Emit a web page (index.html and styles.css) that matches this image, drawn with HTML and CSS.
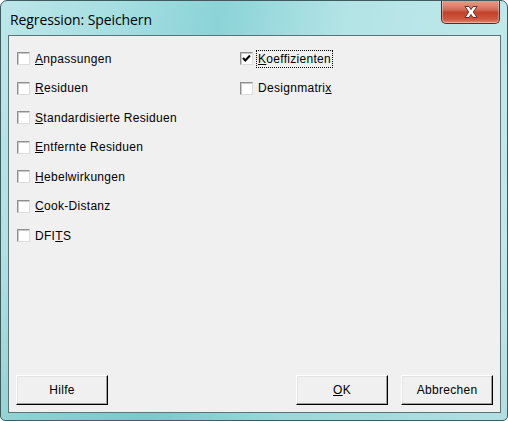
FILE: index.html
```html
<!DOCTYPE html>
<html lang="de">
<head>
<meta charset="UTF-8">
<title>Regression: Speichern</title>
<link rel="stylesheet" href="styles.css">
</head>
<body>
<div class="window">
  <div class="title-bar">
    <span class="title-text">Regression: Speichern</span>
    <button class="close-button" aria-label="Schließen">
      <svg width="20" height="14" viewBox="0 0 20 14">
        <path d="M4 1.5 L8 1.5 L10 4.5 L12 1.5 L16 1.5 L12.3 7 L16 12.5 L12 12.5 L10 9.5 L8 12.5 L4 12.5 L7.7 7 Z" fill="#fff" stroke="#6b2a1e" stroke-width="1" stroke-linejoin="round"/>
      </svg>
    </button>
  </div>

  <div class="client">
    <div class="options">
      <div class="option-column">
        <label class="option"><span class="check-box"></span><span><u>A</u>npassungen</span></label>
        <label class="option"><span class="check-box"></span><span><u>R</u>esiduen</span></label>
        <label class="option"><span class="check-box"></span><span><u>S</u>tandardisierte Residuen</span></label>
        <label class="option"><span class="check-box"></span><span><u>E</u>ntfernte Residuen</span></label>
        <label class="option"><span class="check-box"></span><span><u>H</u>ebelwirkungen</span></label>
        <label class="option"><span class="check-box"></span><span><u>C</u>ook-Distanz</span></label>
        <label class="option"><span class="check-box"></span><span>DFI<u>T</u>S</span></label>
      </div>
      <div class="option-column">
        <label class="option">
          <span class="check-box">
            <svg width="11" height="11" viewBox="0 0 11 11"><path d="M2 5 L4.3 7.5 L9 2.5" fill="none" stroke="#000" stroke-width="2"/></svg>
          </span>
          <span class="focused"><u>K</u>oeffizienten</span>
        </label>
        <label class="option"><span class="check-box"></span><span>Designmatri<u>x</u></span></label>
      </div>
    </div>

    <div class="button-row">
      <button class="push-button">Hilfe</button>
      <div class="button-group">
        <button class="push-button"><u>O</u>K</button>
        <button class="push-button">Abbrechen</button>
      </div>
    </div>
  </div>
</div>
</body>
</html>
```

FILE: styles.css
```css
:root {
  --face: #f0f0f0;
  --frame-dark: #3e5b60;
  --text-color: #000;
}

body {
  margin: 0;
  padding: 0;
  width: 508px;
  height: 421px;
  background: #fff;
  font-family: "Liberation Sans", Arial, sans-serif;
}

.window {
  box-sizing: border-box;
  width: 508px;
  height: 421px;
  border: 1px solid var(--frame-dark);
  border-radius: 7px 7px 5px 5px;
  background:
    linear-gradient(100deg, rgba(255,255,255,0.25) 0%, rgba(255,255,255,0) 20%, rgba(90,190,195,0.35) 38%, rgba(255,255,255,0.15) 60%, rgba(255,255,255,0.35) 100%),
    linear-gradient(180deg, #a6dfe2 0%, #a2dcdf 60%, #89cfd2 100%);
  display: flex;
  flex-direction: column;
  overflow: hidden;
}

.title-bar {
  height: 34px;
  display: flex;
  justify-content: space-between;
  align-items: flex-start;
  padding-left: 9px;
  padding-right: 7px;
}

.title-text {
  margin-top: 9px;
  font-family: "Open Sans", "Noto Sans", sans-serif;
  font-size: 14px;
  color: #000;
  letter-spacing: -0.1px;
}

.close-button {
  width: 59px;
  height: 24px;
  margin-top: -1px;
  padding: 0;
  border: 1px solid #5b2a22;
  border-top: none;
  border-radius: 0 0 5px 5px;
  background: linear-gradient(180deg, #e9a190 0%, #d5705c 40%, #c2412a 55%, #cf5a42 85%, #e38a73 100%);
  box-shadow: inset 0 0 0 1px rgba(255,255,255,0.35);
  display: flex;
  justify-content: center;
  align-items: center;
}

.client {
  flex: 1;
  margin: 0 6px 7px 7px;
  border: 1px solid #5c7377;
  background: var(--face);
  display: flex;
  flex-direction: column;
  justify-content: space-between;
  font-size: 12px;
  letter-spacing: 0.3px;
  color: var(--text-color);
}

.options {
  display: flex;
  padding: 8px 0 0 8px;
}

.option-column {
  display: flex;
  flex-direction: column;
}

.option-column:first-child {
  width: 223px;
}

.option {
  height: 29.5px;
  display: flex;
  align-items: center;
  gap: 5px;
}

.check-box {
  box-sizing: border-box;
  width: 13px;
  height: 13px;
  border: 1px solid;
  border-color: #8e8f8f #dcdcdc #dcdcdc #8e8f8f;
  background: #fff;
  box-shadow: inset 1px 1px 0 #c9c9c9;
  display: flex;
  justify-content: center;
  align-items: center;
}

.focused {
  outline: 1px dotted #000;
  outline-offset: 1px;
}

.button-row {
  display: flex;
  justify-content: space-between;
  padding: 0 7px 7px 7px;
}

.button-group {
  display: flex;
  gap: 13px;
}

.push-button {
  box-sizing: border-box;
  width: 92px;
  height: 30px;
  padding: 0;
  font-family: inherit;
  font-size: 12px;
  letter-spacing: 0.3px;
  color: #000;
  background: var(--face);
  border: 1px solid;
  border-color: #fff #000 #000 #fff;
  box-shadow: inset -1px -1px 0 #a0a0a0, inset 1px 1px 0 #e3e3e3;
}
```
